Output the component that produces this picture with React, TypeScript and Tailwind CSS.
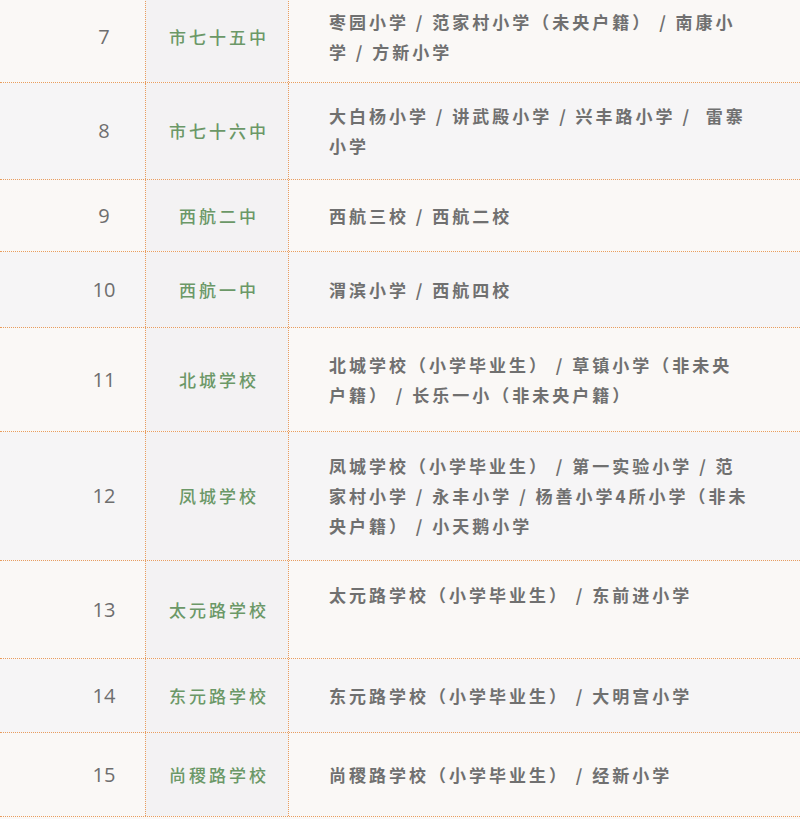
const rows = [
  {
    no: "7",
    school: "市七十五中",
    lines: ["枣园小学 / 范家村小学（未央户籍） / 南康小", "学 / 方新小学"],
    h: "h-[92px]",
    bg: "bg-[#faf8f6]",
  },
  {
    no: "8",
    school: "市七十六中",
    lines: ["大白杨小学 / 讲武殿小学 / 兴丰路小学 /  雷寨", "小学"],
    h: "h-[97px]",
    bg: "bg-[#f6f5f6]",
  },
  {
    no: "9",
    school: "西航二中",
    lines: ["西航三校 / 西航二校"],
    h: "h-[72px]",
    bg: "bg-[#faf8f6]",
  },
  {
    no: "10",
    school: "西航一中",
    lines: ["渭滨小学 / 西航四校"],
    h: "h-[76px]",
    bg: "bg-[#f6f5f6]",
  },
  {
    no: "11",
    school: "北城学校",
    lines: ["北城学校（小学毕业生） / 草镇小学（非未央", "户籍） / 长乐一小（非未央户籍）"],
    h: "h-[104px]",
    bg: "bg-[#faf8f6]",
  },
  {
    no: "12",
    school: "凤城学校",
    lines: [
      "凤城学校（小学毕业生） / 第一实验小学 / 范",
      "家村小学 / 永丰小学 / 杨善小学4所小学（非未",
      "央户籍） / 小天鹅小学",
    ],
    h: "h-[129px]",
    bg: "bg-[#f6f5f6]",
  },
  {
    no: "13",
    school: "太元路学校",
    lines: ["太元路学校（小学毕业生） / 东前进小学", "\u00a0"],
    h: "h-[98px]",
    bg: "bg-[#faf8f6]",
  },
  {
    no: "14",
    school: "东元路学校",
    lines: ["东元路学校（小学毕业生） / 大明宫小学"],
    h: "h-[74px]",
    bg: "bg-[#f6f5f6]",
  },
  {
    no: "15",
    school: "尚稷路学校",
    lines: ["尚稷路学校（小学毕业生） / 经新小学"],
    h: "h-[84px]",
    bg: "bg-[#faf8f6]",
  },
];

export default function App() {
  return (
    <div className="w-[800px] h-[819px] overflow-hidden bg-[#faf8f6]">
      <div className="-mt-[9px]">
        {rows.map((row) => (
          <div
            key={row.no}
            className={`flex ${row.h} ${row.bg} border-b border-dotted border-[#e99d5e]`}
          >
            {/* number */}
            <div className="w-[145px] shrink-0 flex items-center justify-center pl-[63px] text-[20px] text-[#6e6e6e] font-['Open_Sans',sans-serif]">
              {row.no}
            </div>
            {/* middle school */}
            <div className="w-[144px] shrink-0 flex items-center justify-center border-l border-r border-dotted border-[#e99d5e] bg-[#f3f2f3] pl-[4px] text-[17px] tracking-[3px] text-[#6b9867] font-medium font-['Noto_Sans_CJK_SC',sans-serif]">
              {row.school}
            </div>
            {/* primary schools */}
            <div className="flex-1 flex items-center pl-[40px]">
              <div className="text-[17px] leading-[30px] tracking-[3px] text-[#707070] font-bold font-['Noto_Sans_CJK_SC',sans-serif] whitespace-pre">
                {row.lines.map((line, i) => (
                  <p key={i}>{line}</p>
                ))}
              </div>
            </div>
          </div>
        ))}
      </div>
    </div>
  );
}
